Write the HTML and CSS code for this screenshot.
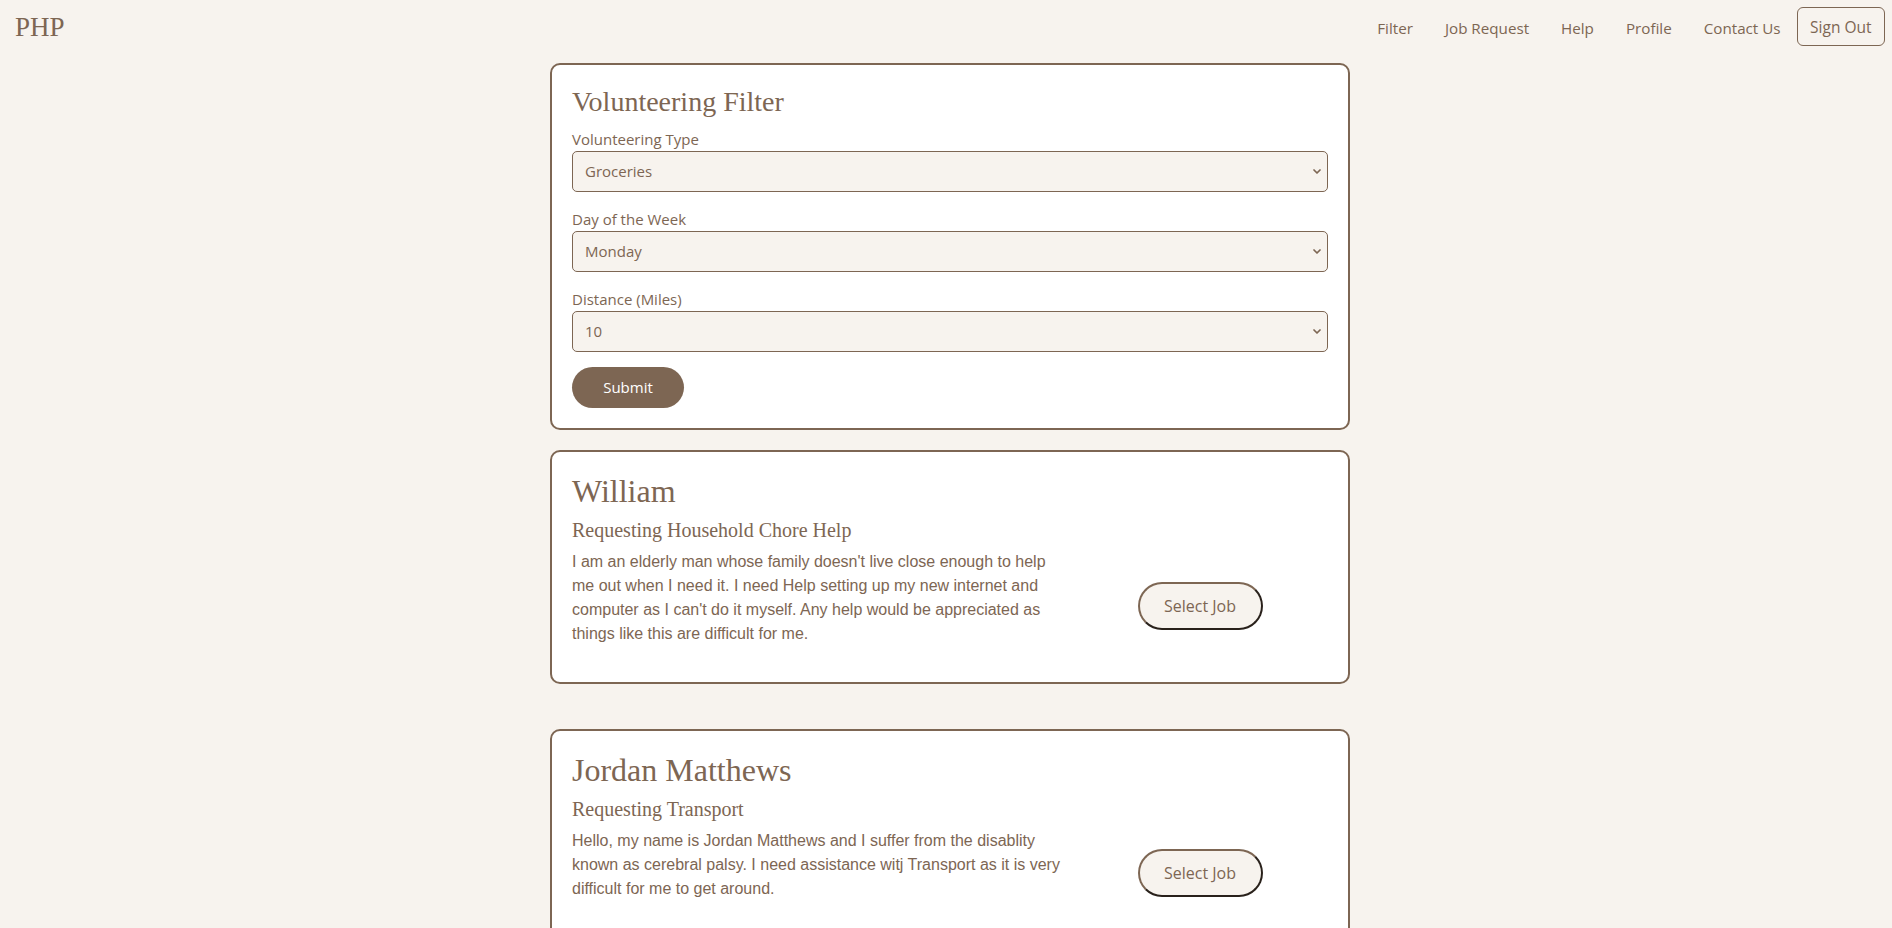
FILE: index.html
```html
<!DOCTYPE html>
<html lang="en">
<head>
<meta charset="utf-8">
<title>PHP - Volunteering Filter</title>
<link rel="stylesheet" href="styles.css">
</head>
<body>
<nav class="navbar">
  <a class="brand" href="#">PHP</a>
  <ul class="nav-links">
    <li><a href="#">Filter</a></li>
    <li><a href="#">Job Request</a></li>
    <li><a href="#">Help</a></li>
    <li><a href="#">Profile</a></li>
    <li><a href="#">Contact Us</a></li>
    <li><a class="sign-out" href="#">Sign Out</a></li>
  </ul>
</nav>

<main class="page">
  <section class="card filter-card">
    <h3 class="filter-title">Volunteering Filter</h3>
    <form class="filter-form">
      <div class="form-group">
        <label for="type">Volunteering Type</label>
        <select id="type" class="form-select">
          <option>Groceries</option>
          <option>Transport</option>
          <option>Household Chores</option>
        </select>
      </div>
      <div class="form-group">
        <label for="day">Day of the Week</label>
        <select id="day" class="form-select">
          <option>Monday</option>
          <option>Tuesday</option>
          <option>Wednesday</option>
        </select>
      </div>
      <div class="form-group">
        <label for="distance">Distance (Miles)</label>
        <select id="distance" class="form-select">
          <option>10</option>
          <option>20</option>
          <option>50</option>
        </select>
      </div>
      <button type="button" class="btn-submit">Submit</button>
    </form>
  </section>

  <section class="card job-card">
    <h2 class="job-name">William</h2>
    <h4 class="job-type">Requesting Household Chore Help</h4>
    <div class="job-row">
      <p class="job-desc">I am an elderly man whose family doesn't live close enough to help me out when I need it. I need Help setting up my new internet and computer as I can't do it myself. Any help would be appreciated as things like this are difficult for me.</p>
      <div class="job-action"><button type="button" class="btn-select">Select Job</button></div>
    </div>
  </section>

  <section class="card job-card">
    <h2 class="job-name">Jordan Matthews</h2>
    <h4 class="job-type">Requesting Transport</h4>
    <div class="job-row">
      <p class="job-desc">Hello, my name is Jordan Matthews and I suffer from the disablity known as cerebral palsy. I need assistance witj Transport as it is very difficult for me to get around.</p>
      <div class="job-action"><button type="button" class="btn-select">Select Job</button></div>
    </div>
  </section>
</main>
</body>
</html>
```

FILE: styles.css
```css
* {
  box-sizing: border-box;
}

html, body {
  margin: 0;
  padding: 0;
}

body {
  background: #f7f3ee;
  color: #7d6653;
  font-family: "Open Sans", "Noto Sans", sans-serif;
  font-size: 15px;
}

a {
  color: inherit;
  text-decoration: none;
}

/* Navbar */
.navbar {
  display: flex;
  align-items: center;
  justify-content: space-between;
  height: 53px;
  padding: 0 7px 0 15px;
}

.brand {
  font-family: "Liberation Serif", "Times New Roman", serif;
  font-size: 27px;
  line-height: 1.2;
  padding-top: 1px;
}

.nav-links {
  display: flex;
  align-items: center;
  list-style: none;
  margin: 0;
  padding: 0;
  font-size: 15.2px;
}

.nav-links a {
  display: block;
  padding: 3px 16px 0;
  line-height: 24px;
}

.nav-links a.sign-out {
  border: 1px solid #7d6653;
  border-radius: 6px;
  padding: 7px 12.5px 5.4px;
  font-size: 15.5px;
}

/* Page */
.page {
  display: flex;
  flex-direction: column;
  align-items: center;
  padding: 10px 0 0 8px;
}

.card {
  width: 800px;
  background: #ffffff;
  border: 2px solid #7d6653;
  border-radius: 10px;
  padding: 20px;
}

.filter-card {
  margin-bottom: 20px;
}

.job-card {
  margin-bottom: 45px;
}

.filter-title,
.job-name,
.job-type {
  font-family: "Liberation Serif", "Times New Roman", serif;
  font-weight: normal;
  line-height: 1.2;
  margin: 0 0 8px;
}

.filter-title {
  font-size: 28px;
}

.form-group {
  margin-bottom: 15px;
}

.form-group label {
  display: block;
  line-height: 24px;
}

.form-select {
  display: block;
  width: 100%;
  height: 41px;
  padding: 0 12px;
  font-family: "Open Sans", "Noto Sans", sans-serif;
  font-size: 15px;
  color: #7d6653;
  background-color: #f7f3ee;
  border: 1px solid #7d6653;
  border-radius: 5px;
  appearance: none;
  -webkit-appearance: none;
  background-image: url("data:image/svg+xml,%3Csvg xmlns='http://www.w3.org/2000/svg' width='8' height='5' viewBox='0 0 8 5'%3E%3Cpath d='M1 1 L4 4 L7 1' fill='none' stroke='%237d6653' stroke-width='1.7' stroke-linecap='round' stroke-linejoin='round'/%3E%3C/svg%3E");
  background-repeat: no-repeat;
  background-position: right 6px center;
  background-size: 8px 5px;
}

.btn-submit {
  display: block;
  width: 112px;
  height: 41px;
  border: none;
  border-radius: 21px;
  background: #7d6653;
  color: #ffffff;
  font-family: "Open Sans", "Noto Sans", sans-serif;
  font-size: 15px;
  cursor: pointer;
}

/* Job cards */
.job-name {
  font-size: 32px;
}

.job-type {
  font-size: 20px;
}

.job-row {
  display: grid;
  grid-template-columns: 500px 1fr;
  align-items: center;
}

.job-desc {
  max-width: 494px;
  margin: 0 0 16px;
  font-family: "Liberation Sans", Arial, sans-serif;
  font-size: 16px;
  line-height: 24px;
}

.job-action {
  display: flex;
  justify-content: center;
}

.btn-select {
  width: 125px;
  height: 48px;
  border: 2px outset #7d6653;
  border-radius: 24px;
  background: #f7f3ee;
  color: #7d6653;
  font-family: "Open Sans", "Noto Sans", sans-serif;
  font-size: 16px;
  cursor: pointer;
}
```
